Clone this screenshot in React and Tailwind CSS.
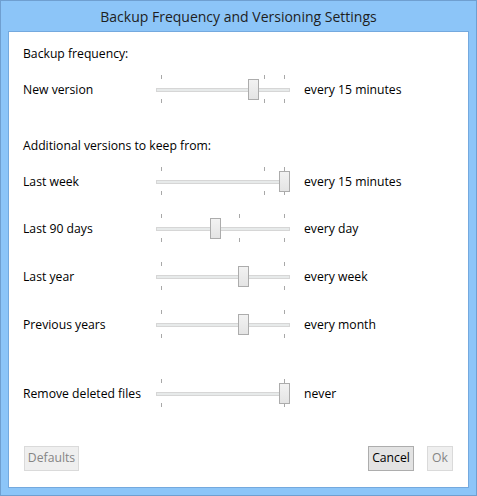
import React from "react";

const rows = [
  { label: "Last week", thumb: 123, ticks: [5, 108, 128], value: "every 15 minutes", mt: "mt-[14px]" },
  { label: "Last 90 days", thumb: 54, ticks: [5, 83, 128], value: "every day", mt: "mt-[23px]" },
  { label: "Last year", thumb: 82, ticks: [5, 128], value: "every week", mt: "mt-[24px]" },
  { label: "Previous years", thumb: 82, ticks: [5, 128], value: "every month", mt: "mt-[24px]" },
];

function Slider({ thumb, ticks }) {
  return (
    <div className="relative h-[24px] w-[134px] shrink-0">
      <div className="absolute left-0 right-0 top-[10px] h-[4px] border border-[#d6d6d6] bg-[#e7eaea]" />
      {ticks.map((t) => (
        <React.Fragment key={t}>
          <div className="absolute top-[-3px] h-[4px] w-px bg-[#a8a8a8]" style={{ left: t }} />
          <div className="absolute top-[21px] h-[4px] w-px bg-[#a8a8a8]" style={{ left: t }} />
        </React.Fragment>
      ))}
      <div
        className="absolute top-[1px] h-[21px] w-[11px] border border-[#acacac] bg-[linear-gradient(#f2f2f2,#e4e4e4)]"
        style={{ left: thumb }}
      />
    </div>
  );
}

function Row({ label, thumb, ticks, value, mt }) {
  return (
    <div className={`flex h-[24px] items-center ${mt}`}>
      <div className="w-[133px] shrink-0">{label}</div>
      <Slider thumb={thumb} ticks={ticks} />
      <div className="ml-[14px]">{value}</div>
    </div>
  );
}

export default function App() {
  return (
    <div
      className="flex h-[496px] w-[477px] flex-col border border-[#6f9fd0] bg-[#8cc5f8] px-[7px] pb-[7px]"
      style={{ fontFamily: "'Open Sans', 'Noto Sans', sans-serif" }}
    >
      <div className="flex h-[30px] items-center justify-center text-[14px] text-[#1e1e1e]">
        Backup Frequency and Versioning Settings
      </div>
      <div className="flex flex-1 flex-col border border-[#74a9de] bg-white pl-[14px] pr-[15px] text-[12.2px] text-black">
        <div className="mt-[12px] flex h-[20px] items-center">Backup frequency:</div>
        <Row label="New version" thumb={92} ticks={[5, 108, 128]} value="every 15 minutes" mt="mt-[14px]" />
        <div className="mt-[34px] flex h-[20px] items-center">Additional versions to keep from:</div>
        {rows.map((r) => (
          <Row key={r.label} {...r} />
        ))}
        <Row label="Remove deleted files" thumb={123} ticks={[5, 128]} value="never" mt="mt-[45px]" />
        <div className="mt-[40px] flex items-center">
          <button className="ml-[1px] h-[25px] w-[55px] border border-[#dadada] bg-[#efefef] text-[#858585]">
            Defaults
          </button>
          <div className="flex-1" />
          <button className="h-[25px] w-[46px] border border-[#adadad] bg-[#e3e3e3] text-black">Cancel</button>
          <button className="ml-[13px] h-[25px] w-[26px] border border-[#dadada] bg-[#efefef] text-[#858585]">
            Ok
          </button>
        </div>
      </div>
    </div>
  );
}
